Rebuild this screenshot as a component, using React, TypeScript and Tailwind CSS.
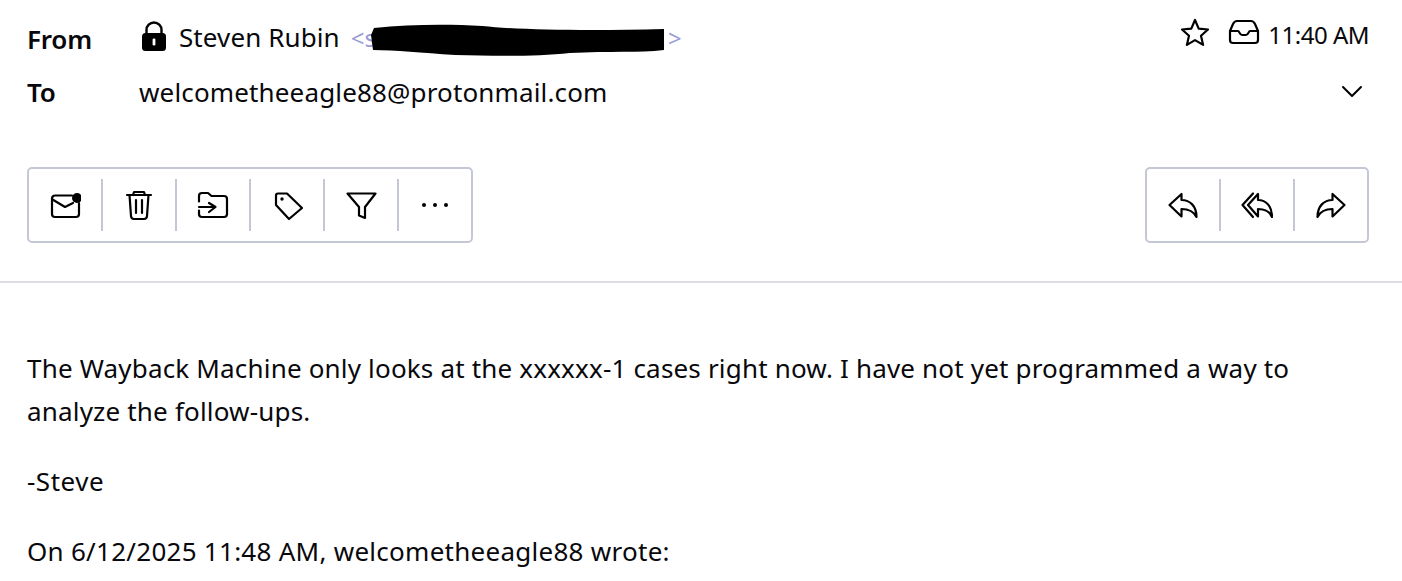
import type { ReactNode } from 'react';

const Ico = ({ children, size = 32 }: { children: ReactNode; size?: number }) => (
  <svg width={size} height={size} viewBox="0 0 32 32" fill="none" stroke="currentColor" strokeWidth="2.2" strokeLinecap="round" strokeLinejoin="round">
    {children}
  </svg>
);

const Tool = ({ children, last }: { children: ReactNode; last?: boolean }) => (
  <div className="flex items-center">
    <button className="flex h-[72px] w-[72px] items-center justify-center text-black">{children}</button>
    {!last && <div className="h-[52px] w-[2px] bg-[#c4c7d6]" />}
  </div>
);

const replyPath = 'M2.5 16 L14.5 5 V11 C23 11 29.5 17 29.5 28 C27 23 22 20 14.5 20 V27.5 Z';

const App = () => {
  return (
    <div className="h-[581px] w-[1402px] overflow-hidden bg-white font-['Noto_Sans',sans-serif] text-[#08080c]">
      {/* Header */}
      <div className="pl-[27px] pr-[33px] pt-[16px]">
        <div className="flex h-[44px] items-center">
          <div className="mt-[2px] w-[112px] text-[26px] font-semibold leading-[36px] tracking-[-0.2px]">From</div>
          <svg width="32" height="32" viewBox="0 0 32 32" className="mb-[4px] ml-[-1px]">
            <path d="M8 15 V10 a7.5 7.5 0 0 1 15 0 V15" fill="none" stroke="#000" strokeWidth="2.4" transform="translate(0.5,0)" />
            <rect x="4" y="13" width="24" height="18" rx="3.5" fill="#000" />
            <rect x="14.6" y="18.5" width="2.8" height="7" rx="1.2" fill="#fff" />
          </svg>
          <span className="mb-[2px] ml-[9px] text-[26px] leading-[36px] tracking-[0.1px]">Steven Rubin</span>
          <div className="relative ml-[11px] mt-[-1px] flex w-[331px] text-[24px] leading-[30px] text-[#9a9bd6]">
            <span>&lt;s</span>
            <span className="ml-auto">&gt;</span>
            <svg width="294" height="34" viewBox="0 0 296 34" className="absolute left-[20px] top-0">
              <path d="M3 5 C40 1 80 1 112 3 C150 7 220 8 295 6 L295 27 C270 30 240 28 200 30 C165 34 120 33 85 32 C50 30 25 27 2 27 L0 12 Z" fill="#000" />
            </svg>
          </div>
          <div className="ml-auto flex items-center">
            <svg width="32" height="32" viewBox="0 0 32 32" fill="none" stroke="#000" strokeWidth="2.2" strokeLinejoin="round" className="mb-[12px]">
              <path d="M16 4 L19.7 12.6 L29 13.5 L22 19.7 L24.1 28.9 L16 24.1 L7.9 28.9 L10 19.7 L3 13.5 L12.3 12.6 Z" />
            </svg>
            <svg width="32" height="32" viewBox="0 0 32 32" fill="none" stroke="#000" strokeWidth="2.2" strokeLinejoin="round" className="mb-[12px] ml-[17px]">
              <path d="M9 5 H23 Q25.5 5 27 8 L30 15 V24 Q30 27 27 27 H5 Q2 27 2 24 V15 L5 8 Q6.5 5 9 5 Z" />
              <path d="M2 15 H10 C11.5 15 11.5 19 14 19 H18 C20.5 19 20.5 15 22 15 H30" />
            </svg>
            <span className="mb-[6px] ml-[8px] text-[24px] leading-[32px] tracking-[-0.5px]">11:40 AM</span>
          </div>
        </div>
        <div className="mt-[10px] flex h-[44px] items-center">
          <div className="w-[112px] text-[26px] font-semibold leading-[36px] tracking-[-0.2px]">To</div>
          <span className="text-[26px] leading-[36px] tracking-[0.15px]">welcometheeagle88@protonmail.com</span>
          <svg width="24" height="14" viewBox="0 0 24 14" fill="none" stroke="#000" strokeWidth="2" strokeLinecap="round" strokeLinejoin="round" className="ml-auto mr-[5px]">
            <path d="M3 2 L12 11 L21 2" />
          </svg>
        </div>
      </div>

      {/* Toolbars */}
      <div className="mt-[53px] flex justify-between pl-[27px] pr-[33px]">
        <div className="flex rounded-[5px] border-2 border-[#c4c7d6]">
          <Tool>
            <Ico>
              <path d="M23 6.5 H6 a3 3 0 0 0 -3 3 V25 a3 3 0 0 0 3 3 H27 a3 3 0 0 0 3 -3 V14" />
              <path d="M3.5 10.5 L16 18 L24 14" />
              <circle cx="28" cy="9" r="5" fill="currentColor" stroke="none" />
            </Ico>
          </Tool>
          <Tool>
            <Ico>
              <path d="M4 6 H28 M10 6 L11 3 H21 L22 6" />
              <path d="M6.5 6 L8 27 Q8.2 30 11 30 H21 Q23.8 30 24 27 L25.5 6" />
              <path d="M13 11 V24 M19 11 V24" />
            </Ico>
          </Tool>
          <Tool>
            <Ico>
              <path d="M2 12.5 V7 Q2 4 5 4 H11 L14.5 7 H27 Q30 7 30 10 V25 Q30 28 27 28 H5 Q2 28 2 25 V21.5" />
              <path d="M2 18 H18 M12 14 L18.5 18 L12 23" />
            </Ico>
          </Tool>
          <Tool>
            <Ico>
              <g transform="translate(2,0)">
                <path d="M5 4.5 H14 L29 19 L16 30 L3 16 V6.5 Q3 4.5 5 4.5 Z" />
                <circle cx="9" cy="10" r="1.7" fill="currentColor" stroke="none" />
              </g>
            </Ico>
          </Tool>
          <Tool>
            <Ico>
              <path d="M2.5 4.5 H30.5 L20 18 V29 L14 26.5 V18 Z" />
            </Ico>
          </Tool>
          <Tool last>
            <Ico>
              <circle cx="5" cy="16" r="2" fill="currentColor" stroke="none" />
              <circle cx="16" cy="16" r="2" fill="currentColor" stroke="none" />
              <circle cx="27" cy="16" r="2" fill="currentColor" stroke="none" />
            </Ico>
          </Tool>
        </div>
        <div className="flex rounded-[5px] border-2 border-[#c4c7d6]">
          <Tool>
            <Ico>
              <path d={replyPath} />
            </Ico>
          </Tool>
          <Tool>
            <Ico>
              <path d="M7 16 L17 5 V11 C25 11 31 17 31 28 C29 23 24 20 17 20 V27.5 Z" />
              <path d="M12 4.5 L1.5 16 L12 28" />
            </Ico>
          </Tool>
          <Tool last>
            <Ico>
              <path d={replyPath} transform="translate(32,0) scale(-1,1)" />
            </Ico>
          </Tool>
        </div>
      </div>

      <div className="mt-[38px] h-[2px] bg-[#dddde8]" />

      {/* Body */}
      <div className="pl-[27px] pr-[100px] pt-[64px] text-[26px] leading-[43px] tracking-[0.18px]">
        <p>The Wayback Machine only looks at the xxxxxx-1 cases right now. I have not yet programmed a way to analyze the follow-ups.</p>
        <p className="mt-[27px] tracking-[0.5px]">-Steve</p>
        <p className="mt-[27px] tracking-[0.27px]">On 6/12/2025 11:48 AM, welcometheeagle88 wrote:</p>
      </div>
    </div>
  );
};

export default App;
